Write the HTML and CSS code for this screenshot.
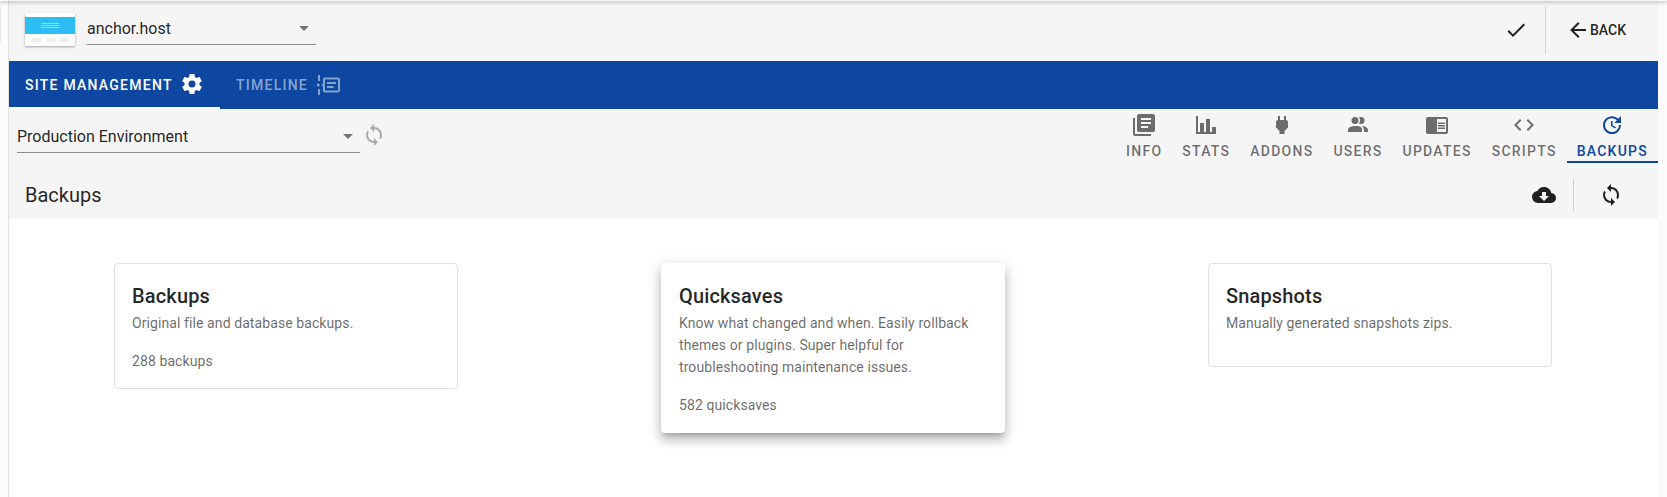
FILE: index.html
```html
<!DOCTYPE html>
<html lang="en">
<head>
<meta charset="utf-8">
<title>Backups</title>
<link rel="stylesheet" href="styles.css">
</head>
<body>
<div class="edge-tab"></div>
<main class="app">
  <header class="top">
    <div class="thumb"><div class="thumb-bar"></div><div class="thumb-hero"><i></i><i></i><i></i></div><div class="thumb-foot"><i></i><i></i><i></i></div></div>
    <div class="select site-select"><span>anchor.host</span><svg class="caret" viewBox="0 0 24 24"><path d="M7,10L12,15L17,10H7Z"/></svg></div>
    <div class="top-actions">
      <svg class="check" viewBox="0 0 24 24"><path d="M21,7L9,19L3.5,13.5L4.91,12.09L9,16.17L19.59,5.59L21,7Z"/></svg>
      <div class="vline"></div>
      <div class="back"><svg viewBox="0 0 24 24"><path d="M20,11V13H8L13.5,18.5L12.08,19.92L4.16,12L12.08,4.08L13.5,5.5L8,11H20Z"/></svg><span>BACK</span></div>
    </div>
  </header>
  <nav class="bluebar">
    <div class="btab active"><span>SITE MANAGEMENT</span><svg viewBox="0 0 24 24"><path d="M12,15.5A3.5,3.5 0 0,1 8.5,12A3.5,3.5 0 0,1 12,8.5A3.5,3.5 0 0,1 15.5,12A3.5,3.5 0 0,1 12,15.5M19.43,12.97C19.47,12.65 19.5,12.33 19.5,12C19.5,11.67 19.47,11.34 19.43,11L21.54,9.37C21.73,9.22 21.78,8.95 21.66,8.73L19.66,5.27C19.54,5.05 19.27,4.96 19.05,5.05L16.56,6.05C16.04,5.66 15.5,5.32 14.87,5.07L14.5,2.42C14.46,2.18 14.25,2 14,2H10C9.75,2 9.54,2.18 9.5,2.42L9.13,5.07C8.5,5.32 7.96,5.66 7.44,6.05L4.95,5.05C4.73,4.96 4.46,5.05 4.34,5.27L2.34,8.73C2.21,8.95 2.27,9.22 2.46,9.37L4.57,11C4.53,11.34 4.5,11.67 4.5,12C4.5,12.33 4.53,12.65 4.57,12.97L2.46,14.63C2.27,14.78 2.21,15.05 2.34,15.27L4.34,18.73C4.46,18.95 4.73,19.03 4.95,18.95L7.44,17.94C7.96,18.34 8.5,18.68 9.13,18.93L9.5,21.58C9.54,21.82 9.75,22 10,22H14C14.25,22 14.46,21.82 14.5,21.58L14.87,18.93C15.5,18.67 16.04,18.34 16.56,17.94L19.05,18.95C19.27,19.03 19.54,18.95 19.66,18.73L21.66,15.27C21.78,15.05 21.73,14.78 21.54,14.63L19.43,12.97Z"/></svg></div>
    <div class="btab dim"><span>TIMELINE</span><svg viewBox="0 0 24 24"><path fill-rule="evenodd" d="M2 2h2v6H2zM2 16h2v6H2zM.7 12a1.5 1.5 0 1 0 3 0a1.5 1.5 0 1 0-3 0zM9 4.500h13a2 2 0 0 1 2 2v11a2 2 0 0 1-2 2H9a2 2 0 0 1-2-2v-4l-1.500-1.500L7 10.500v-4a2 2 0 0 1 2-2zM9 6.500v4.800L8.300 12 9 12.700v4.800h13v-11zM11 9h9v2h-9zM11 13h6.500v2H11z"/></svg></div>
  </nav>
  <section class="subbar">
    <div class="env">
      <div class="select env-select"><span>Production Environment</span><svg class="caret" viewBox="0 0 24 24"><path d="M7,10L12,15L17,10H7Z"/></svg></div>
      <svg class="env-sync" viewBox="0 0 24 24"><path d="M12,18A6,6 0 0,1 6,12C6,11 6.25,10.03 6.7,9.2L5.24,7.74C4.46,8.97 4,10.43 4,12A8,8 0 0,0 12,20V23L16,19L12,15M12,4V1L8,5L12,9V6A6,6 0 0,1 18,12C18,13 17.75,13.97 17.3,14.8L18.76,16.26C19.54,15.03 20,13.57 20,12A8,8 0 0,0 12,4Z"/></svg>
    </div>
    <div class="tabs">
      <div class="tab"><svg viewBox="0 0 24 24"><path fill-rule="evenodd" d="M16,15H9V13H16V15M19,11H9V9H19V11M19,7H9V5H19V7M3,5V21H19V23H3A2,2 0 0,1 1,21V5H3M21,1A2,2 0 0,1 23,3V17C23,18.11 22.11,19 21,19H7A2,2 0 0,1 5,17V3C5,1.89 5.89,1 7,1H21Z"/></svg><span>INFO</span></div>
      <div class="tab"><svg viewBox="0 0 24 24"><path d="M22,21H2V3H4V19H6V10H10V19H12V6H16V19H18V14H22V21Z"/></svg><span>STATS</span></div>
      <div class="tab"><svg viewBox="0 0 24 24"><path d="M16,7V3H14V7H10V3H8V7H8C7,7 6,8 6,9V14.5L9.5,18V21H14.5V18L18,14.5V9C18,8 17,7 16,7Z"/></svg><span>ADDONS</span></div>
      <div class="tab"><svg viewBox="0 0 24 24"><path d="M16 17V19H2V17S2 13 9 13 16 15 16 17M12.5 7.5A3.5 3.5 0 1 0 9 11A3.5 3.5 0 0 0 12.5 7.5M15.94 13A5.32 5.32 0 0 1 18 17V19H22V17S22 13.37 15.94 13M15 4A3.39 3.39 0 0 0 13.07 4.59A5 5 0 0 1 13.07 10.41A3.39 3.39 0 0 0 15 11A3.5 3.5 0 0 0 15 4Z"/></svg><span>USERS</span></div>
      <div class="tab"><svg viewBox="0 0 24 24"><path d="M13,12H20V13.5H13M13,9.5H20V11H13M13,14.5H20V16H13M21,4H3A2,2 0 0,0 1,6V19A2,2 0 0,0 3,21H21A2,2 0 0,0 23,19V6A2,2 0 0,0 21,4M21,19H12V6H21"/></svg><span>UPDATES</span></div>
      <div class="tab"><svg viewBox="0 0 24 24"><path d="M14.6,16.6L19.2,12L14.6,7.4L16,6L22,12L16,18L14.6,16.6M9.4,16.6L4.8,12L9.4,7.4L8,6L2,12L8,18L9.4,16.6Z"/></svg><span>SCRIPTS</span></div>
      <div class="tab current"><svg viewBox="0 0 24 24"><path d="M21,10.12H14.22L16.96,7.3C14.23,4.6 9.81,4.5 7.08,7.2C4.35,9.91 4.35,14.28 7.08,17C9.81,19.7 14.23,19.7 16.96,17C18.32,15.65 19,14.08 19,12.1H21C21,14.08 20.12,16.65 18.36,18.39C14.85,21.87 9.15,21.87 5.64,18.39C2.14,14.92 2.11,9.28 5.62,5.81C9.13,2.34 14.76,2.34 18.27,5.81L21,3V10.12M12.5,8V12.25L16,14.33L15.28,15.54L11,13V8H12.5Z"/></svg><span>BACKUPS</span></div>
    </div>
  </section>
  <section class="titlebar">
    <h1>Backups</h1>
    <div class="title-actions">
      <svg viewBox="0 0 24 24"><path d="M17,13L12,18L7,13H10V9H14V13M19.35,10.03C18.67,6.59 15.64,4 12,4C9.11,4 6.6,5.64 5.35,8.03C2.34,8.36 0,10.9 0,14A6,6 0 0,0 6,20H19A5,5 0 0,0 24,15C24,12.36 21.95,10.22 19.35,10.03Z"/></svg>
      <div class="vline short"></div>
      <svg viewBox="0 0 24 24"><path d="M12,18A6,6 0 0,1 6,12C6,11 6.25,10.03 6.7,9.2L5.24,7.74C4.46,8.97 4,10.43 4,12A8,8 0 0,0 12,20V23L16,19L12,15M12,4V1L8,5L12,9V6A6,6 0 0,1 18,12C18,13 17.75,13.97 17.3,14.8L18.76,16.26C19.54,15.03 20,13.57 20,12A8,8 0 0,0 12,4Z"/></svg>
    </div>
  </section>
  <section class="cards">
    <article class="card">
      <h2>Backups</h2>
      <p>Original file and database backups.</p>
      <p class="count">288 backups</p>
    </article>
    <article class="card raised">
      <h2>Quicksaves</h2>
      <p>Know what changed and when. Easily rollback themes or plugins. Super helpful for troubleshooting maintenance issues.</p>
      <p class="count">582 quicksaves</p>
    </article>
    <article class="card">
      <h2>Snapshots</h2>
      <p>Manually generated snapshots zips.</p>
      <p class="count"></p>
    </article>
  </section>
</main>
</body>
</html>
```
FILE: styles.css
```css
* { box-sizing: border-box; }
html, body { height: 100%; }
body {
  margin: 0;
  padding: 0 9px;
  background: #fbfbfb;
  font-family: Roboto, "Liberation Sans", sans-serif;
  color: rgba(0,0,0,.87);
  overflow: hidden;
  position: relative;
}
body::before {
  content: "";
  position: absolute;
  left: 0; right: 0; top: 0;
  height: 1px;
  box-shadow: 0 0 4px 1px rgba(0,0,0,.3);
  z-index: 3;
}
.edge-tab {
  position: absolute;
  left: -3px; top: 6px;
  width: 4px; height: 37px;
  border: 1px solid #e4e4e4;
  border-radius: 3px;
}
.app { display: flex; flex-direction: column; height: 100%; background: #fff; border-left: 1px solid #e0e0e0; margin-left: -1px; }
svg { fill: currentColor; display: block; }

.top { height: 61px; flex: none; background: #f5f5f5; display: flex; align-items: center; padding: 0 0 0 16px; }
.thumb { width: 50px; height: 33px; margin-top: -2px; background: #fff; box-shadow: 0 1px 2px rgba(0,0,0,.35); display: flex; flex-direction: column; }
.thumb-bar { height: 4px; }
.thumb-hero { height: 17px; background: #2dbdf3; display: flex; flex-direction: column; align-items: center; justify-content: center; gap: 1px; }
.thumb-hero i { display: block; width: 18px; height: 1px; background: #8ddcf8; }
.thumb-foot { flex: 1; display: flex; justify-content: space-around; padding: 4px 4px 0; }
.thumb-foot i { display: block; width: 9px; height: 4px; background: #eeeeee; }
.select { display: flex; align-items: center; justify-content: space-between; border-bottom: 1px solid #8a8a8a; font-size: 16px; }
.caret { width: 24px; height: 24px; color: #757575; }
.site-select { width: 229px; height: 31px; margin-left: 12px; margin-top: -2px; padding-bottom: 2px; }
.top-actions { margin-left: auto; display: flex; align-items: center; height: 100%; }
.check { width: 24px; height: 24px; margin-top: -2px; color: rgba(0,0,0,.87); }
.vline { width: 1px; background: #cfcfcf; height: 48px; margin: -1px 20px 0 17px; }
.vline.short { height: 32px; margin: 0 25px 0 17px; }
.back { display: flex; align-items: center; font-size: 14px; font-weight: 500; margin-right: 32px; margin-top: -2px; }
.back svg { width: 24px; height: 24px; }

.bluebar { height: 48px; background: #0d47a1; display: flex; flex: none; }
.btab { display: flex; align-items: center; height: 48px; padding: 0 16px; gap: 8px; font-size: 14px; font-weight: 500; letter-spacing: 1.25px; color: #fff; white-space: nowrap; }
.btab.active { border-bottom: 2px solid #fff; padding-top: 2px; width: 211px; gap: 7px; }
.btab.active svg { margin-top: -2px; }
.btab svg { width: 24px; height: 24px; flex: none; }
.btab.dim { color: #86a3d0; }

.subbar { height: 61px; background: #f5f5f5; display: flex; justify-content: space-between; flex: none; }
.env { display: flex; align-items: flex-start; padding: 11px 0 0 8px; }
.env-select { width: 343px; height: 33px; }
.env-sync { width: 24px; height: 24px; color: #aaa; margin: 3px 0 0 2px; }
.tabs { display: flex; height: 54px; align-items: stretch; }
.tab { display: flex; flex-direction: column; align-items: center; padding: 4px 10px 0; color: rgba(0,0,0,.56); font-size: 14px; line-height: 20px; font-weight: 500; letter-spacing: 1.25px; }
.tab svg { width: 24px; height: 24px; margin-bottom: 4px; }
.tab.current { color: #0d47a1; border-bottom: 2px solid #0d47a1; }

.titlebar { height: 49px; background: #f5f5f5; display: flex; align-items: center; justify-content: space-between; padding: 0 35px 0 16px; flex: none; }
.titlebar h1 { margin: 0; font-size: 20px; font-weight: 400; }
.title-actions { display: flex; align-items: center; }
.title-actions svg { width: 24px; height: 24px; }

.cards { display: grid; grid-template-columns: repeat(3, 547px); justify-content: center; align-items: start; padding: 44px 1px 0 0; }
.card { width: 344px; justify-self: center; background: #fff; border: 1px solid #e0e0e0; border-radius: 4px; padding: 16px 16px 16px 17px; }
.card.raised { border-color: transparent; box-shadow: 0 5px 5px -3px rgba(0,0,0,.2), 0 8px 10px 1px rgba(0,0,0,.14), 0 3px 14px 2px rgba(0,0,0,.12); }
.card h2 { margin: 0; font-size: 20px; line-height: 32px; font-weight: 500; letter-spacing: .15px; }
.card p { margin: 0; font-size: 14px; line-height: 22px; letter-spacing: .09px; color: rgba(0,0,0,.6); }
.card .count { margin-top: 16px; }
```
